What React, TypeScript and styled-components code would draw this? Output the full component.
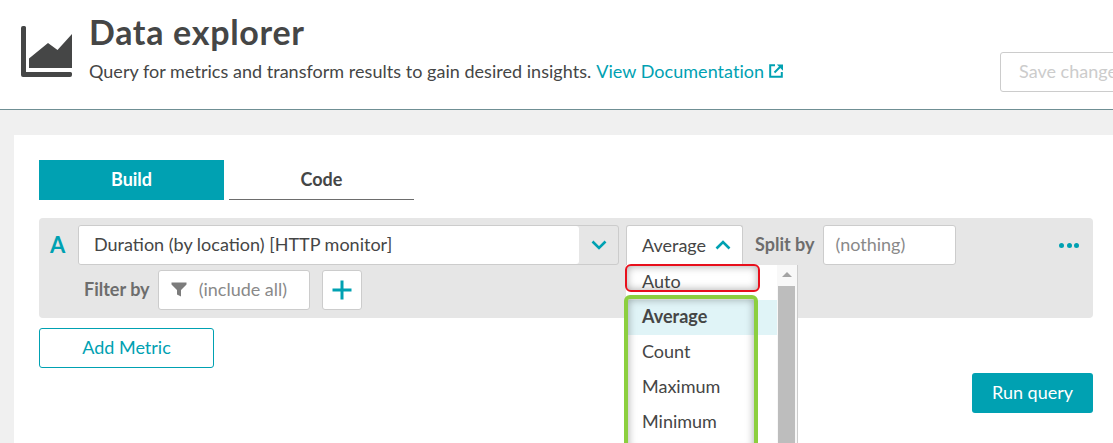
import React from "react";
import styled, { createGlobalStyle } from "styled-components";

const teal = "#00a1b2";
const ink = "#454646";

const Global = createGlobalStyle`
  html, body { margin: 0; padding: 0; background: #f0f0f0; }
  body { font-family: "Lato", "Noto Sans", sans-serif; color: ${ink}; }
  * { box-sizing: border-box; }
`;

const Viewport = styled.div`
  width: 1113px;
  height: 443px;
  overflow: hidden;
  background: #f0f0f0;
`;

const Header = styled.header`
  width: 1140px;
  height: 110px;
  background: #fff;
  border-bottom: 1px solid #6f8f94;
  display: grid;
  grid-template-columns: 51px 1fr 140px;
  column-gap: 18px;
  padding-left: 21px;
`;

const LogoBox = styled.div`
  padding-top: 26px;
  line-height: 0;
`;

const TitleBlock = styled.div`
  padding-top: 11px;
`;

const Title = styled.h1`
  margin: 0 0 0 -1px;
  font-size: 34px;
  line-height: 42px;
  font-weight: 700;
  letter-spacing: 0.7px;
  color: ${ink};
`;

const Subtitle = styled.p`
  margin: 6px 0 0 -1px;
  font-size: 18px;
  line-height: 24px;
  letter-spacing: 0.03px;
  color: ${ink};
  display: flex;
  align-items: center;
`;

const DocLink = styled.a`
  color: ${teal};
  margin-left: 5px;
  display: inline-flex;
  align-items: center;
  gap: 5px;
`;

const SaveButton = styled.button`
  margin-top: 52px;
  height: 40px;
  width: 140px;
  background: #fff;
  border: 1px solid #ccc;
  border-radius: 3px;
  font: 400 18px "Lato", sans-serif;
  color: #ccc;
  text-align: left;
  padding: 0 0 2px 18px;
  white-space: nowrap;
`;

const Main = styled.main`
  padding: 25px 0 0 14px;
`;

const Card = styled.section`
  background: #fff;
  height: 308px;
  padding: 25px 20px 0 25px;
`;

const Tabs = styled.div`
  display: flex;
  gap: 5px;
`;

const Tab = styled.div<{ $active?: boolean }>`
  width: 185px;
  height: 40px;
  padding-bottom: 2px;
  display: flex;
  align-items: center;
  justify-content: center;
  font-size: 18px;
  font-weight: 700;
  color: ${(p) => (p.$active ? "#fff" : ink)};
  background: ${(p) => (p.$active ? teal : "#fff")};
  border-bottom: 1px solid ${(p) => (p.$active ? teal : "#6d6d6d")};
`;

const QueryPanel = styled.div`
  margin-top: 18px;
  height: 100px;
  background: #e6e6e6;
  border-radius: 4px;
  padding: 7px 14px 8px 11px;
  display: flex;
  flex-direction: column;
  gap: 5px;
`;

const Row = styled.div`
  display: flex;
  align-items: center;
  height: 40px;
`;

const FilterRow = styled(Row)`
  padding-left: 34px;
`;

const RowLetter = styled.span`
  width: 28px;
  font-size: 22px;
  font-weight: 700;
  color: ${teal};
  padding-bottom: 2px;
`;

const MetricSelect = styled.div`
  width: 541px;
  height: 40px;
  display: flex;
  border: 1px solid #ccc;
  border-radius: 3px;
  overflow: hidden;
`;

const MetricValue = styled.div`
  flex: 1;
  background: #fff;
  border-radius: 0 3px 3px 0;
  display: flex;
  align-items: center;
  padding: 0 0 2px 15px;
  font-size: 18px;
  white-space: nowrap;
`;

const MetricToggle = styled.div`
  width: 39px;
  display: flex;
  align-items: center;
  justify-content: center;
`;

const AggregationWrap = styled.div`
  position: relative;
  margin-left: 7px;
`;

const AggregationButton = styled.div`
  width: 117px;
  height: 40px;
  background: #fff;
  border: 1px solid #ccc;
  border-bottom: none;
  border-radius: 3px 3px 0 0;
  display: flex;
  align-items: center;
  justify-content: space-between;
  padding: 0 11px 2px 15px;
  font-size: 18px;
`;

const FieldLabel = styled.span<{ $gap: number }>`
  font-size: 18px;
  font-weight: 700;
  color: #6d6d6d;
  margin-right: ${(p) => p.$gap}px;
  padding-bottom: 2px;
`;

const SplitLabel = styled(FieldLabel)`
  margin-left: 12px;
`;

const GhostField = styled.div<{ $width: number }>`
  width: ${(p) => p.$width}px;
  height: 40px;
  background: #fff;
  border: 1px solid #ccc;
  border-radius: 3px;
  display: flex;
  align-items: center;
  padding: 0 0 2px 12px;
  gap: 12px;
  font-size: 18px;
  color: #898989;
  white-space: nowrap;
`;

const MoreDots = styled.div`
  margin-left: auto;
  width: 20px;
  display: flex;
  justify-content: space-between;
`;

const Dot = styled.i`
  width: 5px;
  height: 5px;
  border-radius: 50%;
  background: ${teal};
`;

const PlusButton = styled.button`
  margin-left: 12px;
  width: 40px;
  height: 40px;
  background: #fff;
  border: 1px solid #ccc;
  border-radius: 3px;
  padding: 0;
  display: flex;
  align-items: center;
  justify-content: center;
`;

const Footer = styled.div`
  display: grid;
  grid-template-columns: 175px 1fr 121px;
  margin-top: 10px;
`;

const AddMetric = styled.button`
  height: 40px;
  background: #fff;
  border: 1px solid ${teal};
  border-radius: 3px;
  color: ${teal};
  font: 400 18px "Lato", sans-serif;
  padding: 0 0 2px;
`;

const RunQuery = styled.button`
  grid-column: 3;
  margin-top: 45px;
  height: 40px;
  background: ${teal};
  border: none;
  border-radius: 3px;
  color: #fff;
  font: 400 18px "Lato", sans-serif;
  padding: 0 0 2px;
`;

const Dropdown = styled.div`
  position: absolute;
  left: 0;
  top: 40px;
  width: 172px;
  height: 200px;
  background: #fff;
  border-right: 1px solid #ccc;
  display: flex;
`;

const OptionList = styled.ul`
  list-style: none;
  margin: 0;
  padding: 0;
  flex: 1;
`;

const Option = styled.li<{ $selected?: boolean }>`
  height: 35px;
  display: flex;
  align-items: center;
  padding: 0 0 3px 16px;
  font-size: 18px;
  font-weight: ${(p) => (p.$selected ? 700 : 400)};
  background: ${(p) => (p.$selected ? "#e0f4f7" : "#fff")};
`;

const Scrollbar = styled.div`
  width: 20px;
  background: #f8f8f8;
  padding: 0 2px 0 1px;
  display: flex;
  flex-direction: column;
  align-items: center;
`;

const ScrollArrow = styled.i`
  margin-top: 7px;
  width: 0;
  height: 0;
  border-left: 5px solid transparent;
  border-right: 5px solid transparent;
  border-bottom: 5px solid #a3a3a3;
`;

const ScrollThumb = styled.div`
  margin-top: 9px;
  width: 100%;
  flex: 1;
  background: #bdbdbd;
`;

const Annotation = styled.div<{ $color: string; $w: number; $top: number; $h: number; $left: number; $stroke: number }>`
  position: absolute;
  left: ${(p) => p.$left}px;
  top: ${(p) => p.$top}px;
  width: ${(p) => p.$w}px;
  height: ${(p) => p.$h}px;
  border: ${(p) => p.$stroke}px solid ${(p) => p.$color};
  border-radius: 6px;
  pointer-events: none;
  box-shadow: inset 0 0 8px rgba(0, 0, 0, 0.35);
`;

const Chevron = ({ up }: { up?: boolean }) => (
  <svg width="16" height="10" viewBox="0 0 16 10" fill="none">
    <path d={up ? "M1.5 8.5 8 2l6.5 6.5" : "M1.5 1.5 8 8l6.5-6.5"} stroke={teal} strokeWidth="2.6" />
  </svg>
);

const AreaLogo = () => (
  <svg width="51" height="51" viewBox="0 0 51 51">
    <path
      d="M2 0h1.5a1.5 1.5 0 0 1 1.500 1.500V46h44.500a1.500 1.500 0 0 1 1.500 1.500V49a2 2 0 0 1-2 2H2a2 2 0 0 1-2-2V2a2 2 0 0 1 2-2z"
      fill="#454646"
    />
    <path d="M8 32.500 27 17l9.500 7L51 8v34H8z" fill="#454646" />
  </svg>
);

const ExternalIcon = () => (
  <svg width="14" height="14" viewBox="0 0 14 14" fill="none">
    <path d="M6 1.200H1.200v11.600h11.600V8" stroke={teal} strokeWidth="2" />
    <path d="M5.500 8.500 11 3" stroke={teal} strokeWidth="2" />
    <path d="M7.800 0.500H14v6.200z" fill={teal} />
  </svg>
);

const FilterIcon = () => (
  <svg width="16" height="15" viewBox="0 0 16 15">
    <path d="M0.500 0.500h15v2L10 8v6.500L6 12.500V8L0.500 2.500z" fill="#7c7c7c" />
  </svg>
);

const PlusIcon = () => (
  <svg width="20" height="20" viewBox="0 0 20 20">
    <path d="M10 0.500v19M0.500 10h19" stroke={teal} strokeWidth="3" />
  </svg>
);

export default function App() {
  return (
    <Viewport>
      <Global />
      <Header>
        <LogoBox>
          <AreaLogo />
        </LogoBox>
        <TitleBlock>
          <Title>Data explorer</Title>
          <Subtitle>
            Query for metrics and transform results to gain desired insights.
            <DocLink>
              View Documentation
              <ExternalIcon />
            </DocLink>
          </Subtitle>
        </TitleBlock>
        <SaveButton>Save changes</SaveButton>
      </Header>
      <Main>
        <Card>
          <Tabs>
            <Tab $active>Build</Tab>
            <Tab>Code</Tab>
          </Tabs>
          <QueryPanel>
            <Row>
              <RowLetter>A</RowLetter>
              <MetricSelect>
                <MetricValue>Duration (by location) [HTTP monitor]</MetricValue>
                <MetricToggle>
                  <Chevron />
                </MetricToggle>
              </MetricSelect>
              <AggregationWrap>
                <AggregationButton>
                  Average
                  <Chevron up />
                </AggregationButton>
                <Dropdown>
                  <OptionList>
                    <Option>Auto</Option>
                    <Option $selected>Average</Option>
                    <Option>Count</Option>
                    <Option>Maximum</Option>
                    <Option>Minimum</Option>
                  </OptionList>
                  <Scrollbar>
                    <ScrollArrow />
                    <ScrollThumb />
                  </Scrollbar>
                </Dropdown>
                <Annotation $color="#e8101c" $left={-1} $top={39} $w={135} $h={28} $stroke={2} />
                <Annotation $color="#8ccf3f" $left={-2} $top={70} $w={134} $h={160} $stroke={4} />
              </AggregationWrap>
              <SplitLabel $gap={8}>Split by</SplitLabel>
              <GhostField $width={133}>(nothing)</GhostField>
              <MoreDots>
                <Dot />
                <Dot />
                <Dot />
              </MoreDots>
            </Row>
            <FilterRow>
              <FieldLabel $gap={8}>Filter by</FieldLabel>
              <GhostField $width={152}>
                <FilterIcon />
                (include all)
              </GhostField>
              <PlusButton>
                <PlusIcon />
              </PlusButton>
            </FilterRow>
          </QueryPanel>
          <Footer>
            <AddMetric>Add Metric</AddMetric>
            <RunQuery>Run query</RunQuery>
          </Footer>
        </Card>
      </Main>
    </Viewport>
  );
}
